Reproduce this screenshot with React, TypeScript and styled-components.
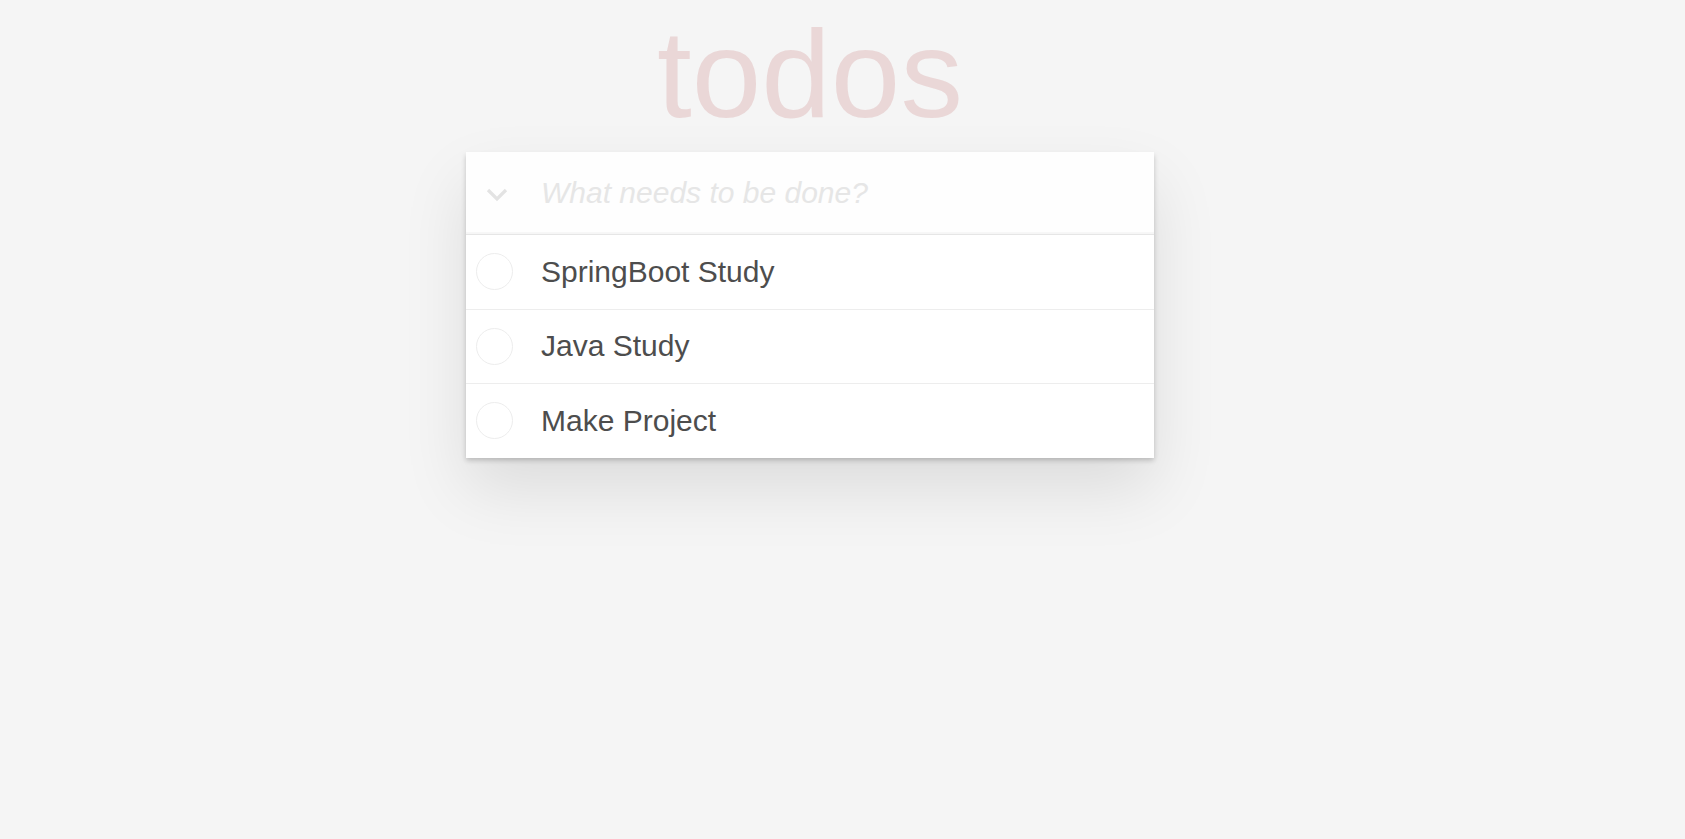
import React, { useState } from 'react';
import styled, { createGlobalStyle } from 'styled-components';

const GlobalStyle = createGlobalStyle`
  html, body {
    margin: 0;
    padding: 0;
  }

  body {
    min-height: 100vh;
    background: #f5f5f5;
    color: #4d4d4d;
    font-family: "Liberation Sans", Arial, Helvetica, sans-serif;
    font-weight: 300;
    -webkit-font-smoothing: antialiased;
  }
`;

// the app sits a bit left of the window centre, like in the original
const Shell = styled.div`
  padding-right: 65px;
`;

const Page = styled.section`
  max-width: 688px;
  margin: 0 auto;
  padding-bottom: 50px;
`;

const Title = styled.h1`
  margin: 0 0 5px;
  font-size: 125px;
  line-height: 147px;
  font-weight: 100;
  text-align: center;
  color: rgba(175, 47, 47, 0.15);
  text-rendering: optimizeLegibility;
`;

const Card = styled.div`
  background: #fff;
  box-shadow: 0 2.5px 5px 0 rgba(0, 0, 0, 0.2), 0 31px 62px 0 rgba(0, 0, 0, 0.1);
`;

const NewTodoRow = styled.header`
  display: flex;
  align-items: center;
  background: rgba(0, 0, 0, 0.003);
  box-shadow: inset 0 -2px 1px rgba(0, 0, 0, 0.03);
`;

const ToggleAll = styled.button`
  flex: 0 0 75px;
  height: 82px;
  display: flex;
  align-items: center;
  justify-content: flex-start;
  padding: 4px 0 0 19px;
  border: none;
  background: transparent;
  cursor: pointer;
`;

const NewTodoInput = styled.input`
  flex: 1;
  min-width: 0;
  border: none;
  outline: none;
  background: transparent;
  padding: 20px 20px 20px 0;
  font-family: inherit;
  font-size: 30px;
  line-height: 42px;
  color: #4d4d4d;

  &::placeholder {
    font-style: italic;
    font-weight: 300;
    color: #e6e6e6;
  }
`;

const List = styled.ul`
  margin: 0;
  padding: 0;
  list-style: none;
  border-top: 1px solid #e6e6e6;
`;

const Item = styled.li`
  display: flex;
  align-items: center;
  border-bottom: 1px solid #ededed;

  &:last-child {
    border-bottom: none;
  }
`;

const Check = styled.span<{ $done: boolean }>`
  flex: 0 0 auto;
  width: 35px;
  height: 35px;
  margin-left: 10px;
  border: 1px solid ${(p) => (p.$done ? '#bddad5' : '#ededed')};
  border-radius: 50%;
  cursor: pointer;
`;

const Label = styled.label<{ $done: boolean }>`
  flex: 1;
  padding: 18.75px 18.75px 18.75px 28px;
  font-size: 30px;
  line-height: 36px;
  color: ${(p) => (p.$done ? '#d9d9d9' : '#4d4d4d')};
  text-decoration: ${(p) => (p.$done ? 'line-through' : 'none')};
  word-break: break-all;
`;

const Chevron = () => (
  <svg width="24" height="16" viewBox="0 0 24 16">
    <polyline points="3,3 12,12 21,3" fill="none" stroke="#e3e3e3" strokeWidth="3.2" />
  </svg>
);

type Todo = { id: number; title: string; done: boolean };

export default function App() {
  const [todos, setTodos] = useState<Todo[]>([
    { id: 1, title: 'SpringBoot Study', done: false },
    { id: 2, title: 'Java Study', done: false },
    { id: 3, title: 'Make Project', done: false },
  ]);
  const [text, setText] = useState('');

  const toggle = (id: number) =>
    setTodos(todos.map((t) => (t.id === id ? { ...t, done: !t.done } : t)));

  return (
    <Shell>
      <GlobalStyle />
      <Page>
        <Title>todos</Title>
        <Card>
          <NewTodoRow>
            <ToggleAll aria-label="Mark all as complete">
              <Chevron />
            </ToggleAll>
            <NewTodoInput
              placeholder="What needs to be done?"
              value={text}
              onChange={(e) => setText(e.target.value)}
            />
          </NewTodoRow>
          <List>
            {todos.map((todo) => (
              <Item key={todo.id}>
                <Check $done={todo.done} onClick={() => toggle(todo.id)} />
                <Label $done={todo.done}>{todo.title}</Label>
              </Item>
            ))}
          </List>
        </Card>
      </Page>
    </Shell>
  );
}
